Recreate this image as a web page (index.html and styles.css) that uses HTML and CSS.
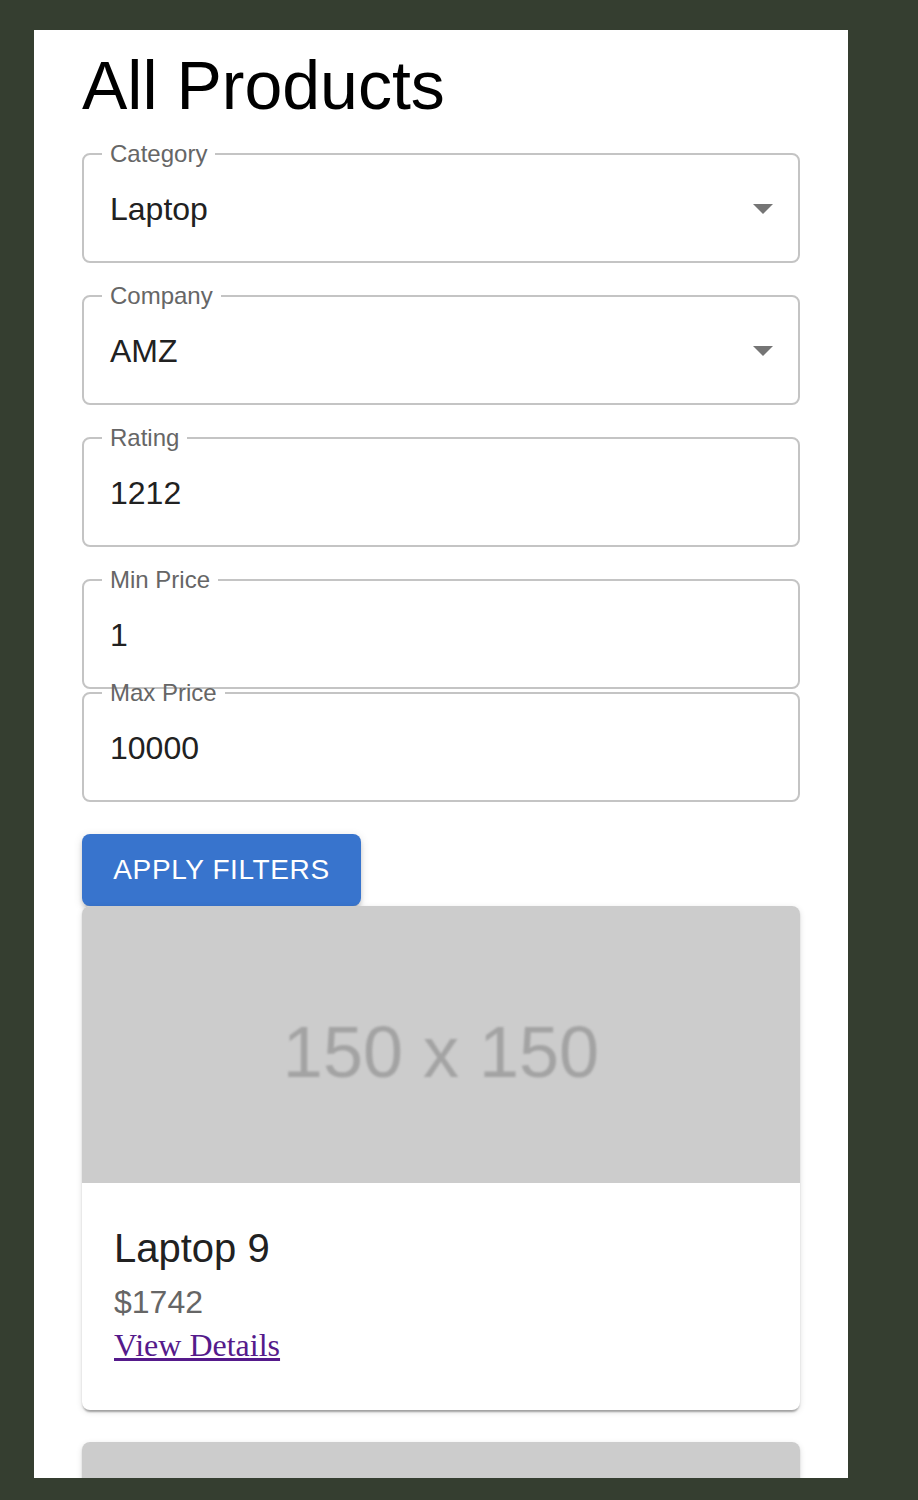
FILE: index.html
```html
<!DOCTYPE html>
<html lang="en">

<head>
    <meta charset="UTF-8">
    <meta name="viewport" content="width=device-width, initial-scale=1.0">
    <title>All Products</title>
    <link rel="stylesheet" href="styles.css">
</head>

<body>

<div class="page">
    <h1 class="title">All Products</h1>

    <!-- Filters -->
    <form id="filterForm">
        <fieldset class="field">
            <legend>Category</legend>
            <div class="value">
                <span>Laptop</span>
                <svg class="arrow" viewBox="0 0 24 24" width="48" height="48"><path d="M7 10l5 5 5-5z"></path></svg>
            </div>
        </fieldset>

        <fieldset class="field">
            <legend>Company</legend>
            <div class="value">
                <span>AMZ</span>
                <svg class="arrow" viewBox="0 0 24 24" width="48" height="48"><path d="M7 10l5 5 5-5z"></path></svg>
            </div>
        </fieldset>

        <fieldset class="field">
            <legend>Rating</legend>
            <div class="value"><span>1212</span></div>
        </fieldset>

        <fieldset class="field field-tight">
            <legend>Min Price</legend>
            <div class="value"><span>1</span></div>
        </fieldset>

        <fieldset class="field">
            <legend>Max Price</legend>
            <div class="value"><span>10000</span></div>
        </fieldset>

        <button type="button" class="apply-btn">Apply Filters</button>
    </form>

    <!-- Product list -->
    <div class="product-list">
        <div class="card">
            <div class="card-media"><span>150 x 150</span></div>
            <div class="card-content">
                <div class="card-title">Laptop 9</div>
                <div class="card-price">$1742</div>
                <a class="card-link" href="#">View Details</a>
            </div>
        </div>

        <!-- next card, only its picture shows above the fold -->
        <div class="card">
            <div class="card-media"></div>
        </div>
    </div>
</div>

</body>

</html>
```

FILE: styles.css
```css
body {
    margin: 0;
    padding: 30px 0 0 34px;
    background-color: #353e30;
    font-family: "Liberation Sans", Arial, sans-serif;
}

.page {
    box-sizing: border-box;
    width: 814px;
    height: 1448px;
    padding: 13px 48px 0;
    background-color: #fff;
    overflow: hidden; /* the list keeps going below the window */
}

.title {
    margin: 0 0 15px;
    font-size: 68px;
    font-weight: 400;
    line-height: 84px;
    color: #000;
}

form {
    margin: 0;
}

/* Outlined text field */
.field {
    margin: 0 0 21px;
    padding: 0 0 0 18px;
    border: 2px solid #c4c4c4;
    border-radius: 8px;
    min-width: 0;
}

.field-tight {
    margin-bottom: -8px;
}

.field legend {
    padding: 0 8px;
    font-size: 24px;
    line-height: 24px;
    color: #666;
}

.value {
    display: flex;
    align-items: center;
    justify-content: space-between;
    height: 46px;
    padding: 20px 11px 29px 8px;
    font-size: 32px;
    line-height: 46px;
    color: #212121;
}

.arrow {
    fill: #757575;
    margin-top: -2px;
}

.apply-btn {
    display: block;
    width: 279px;
    height: 72px;
    margin: 32px 0 0;
    padding: 0;
    border: none;
    border-radius: 8px;
    background-color: #3874cd;
    color: #fff;
    font-family: inherit;
    font-size: 28px;
    font-weight: 500;
    letter-spacing: 0.6px;
    text-transform: uppercase;
    cursor: pointer;
    box-shadow: 0 6px 2px -4px rgba(0, 0, 0, 0.2), 0 4px 4px 0 rgba(0, 0, 0, 0.14), 0 2px 10px 0 rgba(0, 0, 0, 0.12);
}

/* Cards */
.card {
    margin-bottom: 32px;
    border-radius: 8px;
    background-color: #fff;
    overflow: hidden;
    box-shadow: 0 4px 2px -2px rgba(0, 0, 0, 0.2), 0 2px 2px 0 rgba(0, 0, 0, 0.14), 0 2px 6px 0 rgba(0, 0, 0, 0.12);
}

.card-media {
    display: flex;
    align-items: center;
    justify-content: center;
    height: 277px;
    padding-top: 14px;
    box-sizing: border-box;
    background-color: #cccccc;
}

.card-media span {
    font-size: 72px;
    color: #a3a3a3;
    filter: blur(1.2px);
}

.card-content {
    padding: 33px 32px 44px;
}

.card-title {
    font-size: 40px;
    line-height: 64px;
    color: #212121;
}

.card-price {
    font-size: 32px;
    line-height: 44px;
    color: #666;
}

.card-link {
    display: inline-block;
    font-family: "Liberation Serif", "Times New Roman", serif;
    font-size: 32px;
    line-height: 42px;
    color: #551a8b;
}
```
